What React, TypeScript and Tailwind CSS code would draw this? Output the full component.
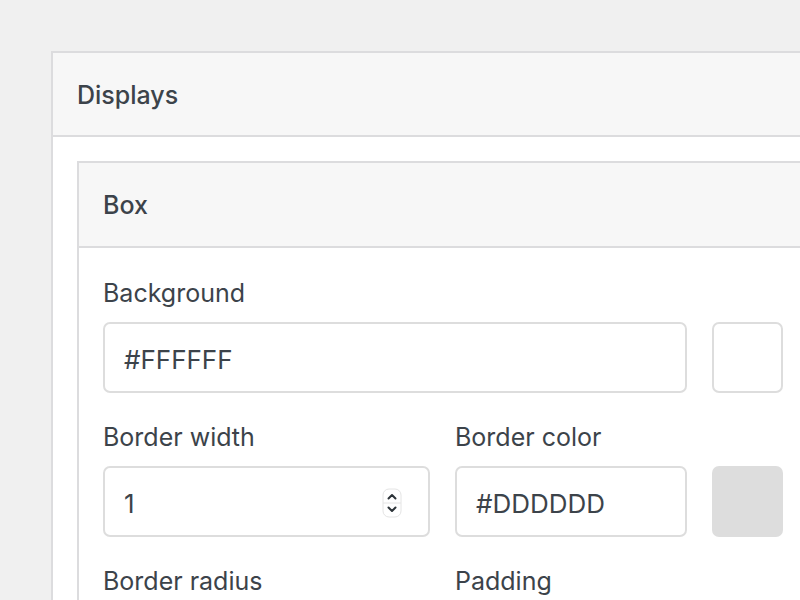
const Spinner = () => (
  <svg width="20" height="30" viewBox="0 0 20 30" className="shrink-0">
    <rect x="1" y="1" width="18" height="28" rx="6" fill="#fff" stroke="#e4e4e4" strokeWidth="1" />
    <line x1="1" y1="15" x2="19" y2="15" stroke="#e4e4e4" strokeWidth="1" />
    <path d="M6.5 10.5 L10 7 L13.5 10.5" fill="none" stroke="#2c3338" strokeWidth="2" strokeLinecap="round" strokeLinejoin="round" />
    <path d="M6.5 19.5 L10 23 L13.5 19.5" fill="none" stroke="#2c3338" strokeWidth="2" strokeLinecap="round" strokeLinejoin="round" />
  </svg>
)

const Field = ({ label, children }: { label: string; children: React.ReactNode }) => (
  <div className="flex flex-col">
    <label className="text-[25px] leading-[34px] mb-[12px]">{label}</label>
    {children}
  </div>
)

const inputCls =
  "h-[71px] border-2 border-[#dddddd] rounded-[7px] bg-white flex items-center pl-[19px] pr-[26px] pt-[3px] text-[26px]"

export default function App() {
  return (
    <div
      className="w-[800px] h-[600px] overflow-hidden bg-[#f0f0f0] pt-[51px] pl-[51px] text-[#3c434a]"
      style={{ fontFamily: "Inter, 'Noto Sans', sans-serif" }}
    >
      {/* outer card */}
      <div className="w-[900px] h-[700px] bg-white border-2 border-[#dcdcde]">
        <div className="h-[84px] bg-[#f7f7f7] border-b-2 border-[#dcdcde] flex items-center px-[24px] pt-[3px]">
          <h2 className="text-[25px] font-medium">Displays</h2>
        </div>
        <div className="p-[24px]">
          {/* inner card */}
          <div className="w-[850px] border-2 border-[#dcdcde]">
            <div className="h-[85px] bg-[#f7f7f7] border-b-2 border-[#dcdcde] flex items-center px-[24px] pt-[3px]">
              <h3 className="text-[25px] font-medium">Box</h3>
            </div>
            <div className="pt-[28px] pl-[24px] flex flex-col gap-[27px]">
              {/* background row */}
              <div className="flex items-end gap-[25px]">
                <div className="w-[584px]">
                  <Field label="Background">
                    <div className={inputCls}>#FFFFFF</div>
                  </Field>
                </div>
                <div className="w-[71px] h-[71px] rounded-[7px] border-2 border-[#dddddd] bg-white" />
              </div>
              {/* border row */}
              <div className="flex items-end gap-[25px]">
                <div className="w-[327px]">
                  <Field label="Border width">
                    <div className={inputCls + " justify-between"}>
                      <span>1</span>
                      <Spinner />
                    </div>
                  </Field>
                </div>
                <div className="w-[232px]">
                  <Field label="Border color">
                    <div className={inputCls}>#DDDDDD</div>
                  </Field>
                </div>
                <div className="w-[71px] h-[71px] rounded-[7px] bg-[#dddddd]" />
              </div>
              {/* radius row */}
              <div className="flex gap-[25px]">
                <div className="w-[327px]">
                  <Field label="Border radius">
                    <div className={inputCls}>0</div>
                  </Field>
                </div>
                <div className="w-[232px]">
                  <Field label="Padding">
                    <div className={inputCls}>10</div>
                  </Field>
                </div>
              </div>
            </div>
          </div>
        </div>
      </div>
    </div>
  )
}
